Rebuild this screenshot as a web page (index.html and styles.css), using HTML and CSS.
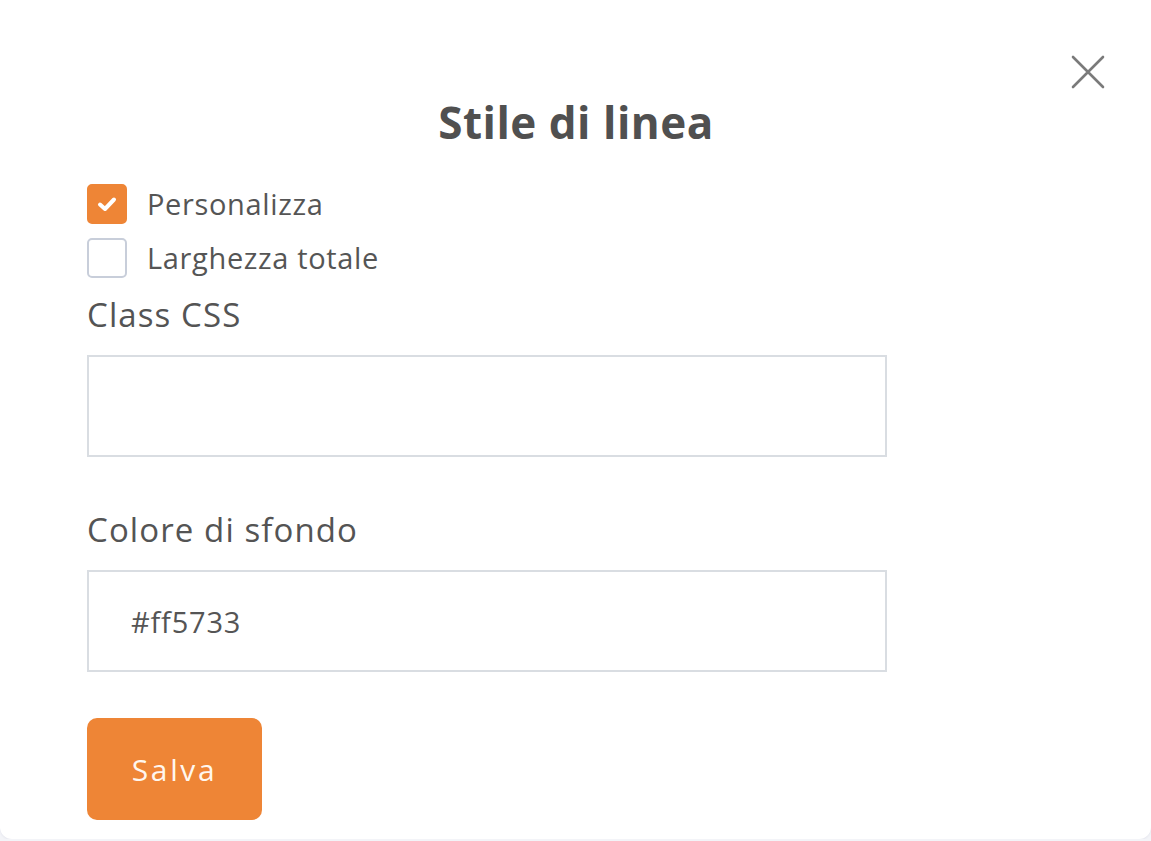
FILE: index.html
```html
<!DOCTYPE html>
<html lang="it">
<head>
<meta charset="utf-8">
<title>Stile di linea</title>
<link rel="stylesheet" href="styles.css">
</head>
<body>
<div class="modal">
  <button class="close" aria-label="Chiudi">
    <svg width="34" height="34" viewBox="0 0 34 34"><path d="M2 2 L32 32 M32 2 L2 32" stroke="#7a7a7a" stroke-width="2.6" stroke-linecap="round" fill="none"/></svg>
  </button>
  <h1 class="title">Stile di linea</h1>
  <div class="checks">
    <label class="check">
      <span class="box box-on">
        <svg width="22" height="18" viewBox="0 0 22 18"><path d="M4 9.5 L9 14 L18 4.5" stroke="#fff" stroke-width="4" stroke-linecap="round" stroke-linejoin="round" fill="none"/></svg>
      </span>
      <span class="check-text">Personalizza</span>
    </label>
    <label class="check">
      <span class="box"></span>
      <span class="check-text">Larghezza totale</span>
    </label>
  </div>
  <div class="field field-first">
    <div class="field-label">Class CSS</div>
    <div class="input"></div>
  </div>
  <div class="field">
    <div class="field-label">Colore di sfondo</div>
    <div class="input"><span class="input-value">#ff5733</span></div>
  </div>
  <button class="save">Salva</button>
</div>
</body>
</html>
```

FILE: styles.css
```css
html, body {
  margin: 0;
  padding: 0;
}
body {
  background: #f3f4f8;
  font-family: "Open Sans", "Noto Sans", sans-serif;
  color: #545454;
}
.modal {
  position: relative;
  box-sizing: border-box;
  height: 839px;
  background: #fff;
  border-radius: 0 0 12px 12px;
  box-shadow: 0 1px 2px rgba(60, 70, 110, 0.08);
  padding: 94px 88px 0 87px;
}
.close {
  position: absolute;
  top: 55px;
  right: 46px;
  background: none;
  border: 0;
  padding: 0;
  width: 34px;
  height: 34px;
  cursor: pointer;
}
.close svg { display: block; }
.title {
  margin: 0;
  text-align: center;
  font-size: 44px;
  line-height: 56px;
  font-weight: 700;
  letter-spacing: 0.5px;
  color: #505050;
  padding-left: 2px;
}
.checks {
  margin-top: 34px;
  display: flex;
  flex-direction: column;
  gap: 14px;
}
.check {
  display: flex;
  align-items: center;
  gap: 20px;
  height: 40px;
}
.box {
  box-sizing: border-box;
  width: 40px;
  height: 40px;
  border: 2px solid #c8ceda;
  border-radius: 5px;
  display: flex;
  align-items: center;
  justify-content: center;
  background: #fff;
}
.box-on {
  background: #ee8536;
  border-color: #ee8536;
}
.box svg { display: block; }
.check-text {
  font-size: 29px;
  line-height: 40px;
  letter-spacing: 0.65px;
  color: #555;
}
.field {
  margin-top: 53px;
}
.field-first {
  margin-top: 17px;
}
.field-label {
  font-size: 33px;
  line-height: 40px;
  letter-spacing: 1.1px;
  color: #545454;
}
.input {
  box-sizing: border-box;
  margin-top: 20px;
  width: 800px;
  height: 102px;
  border: 2px solid #d9dde2;
  display: flex;
  align-items: center;
  padding-left: 42px;
}
.input-value {
  font-size: 29px;
  letter-spacing: 0.8px;
  color: #555;
  padding-top: 1px;
}
.save {
  margin-top: 46px;
  width: 175px;
  height: 102px;
  border: 0;
  border-radius: 10px;
  background: #ee8536;
  color: #fff7ee;
  font-family: "Open Sans", "Noto Sans", sans-serif;
  font-size: 30px;
  letter-spacing: 2.6px;
  padding: 0;
  cursor: pointer;
}
```
